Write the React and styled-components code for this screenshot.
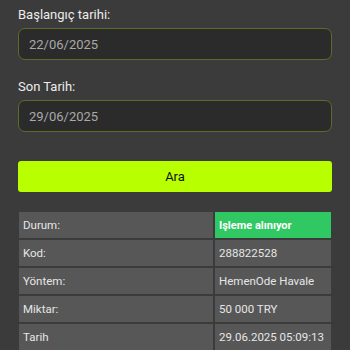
import React from "react";
import styled, { createGlobalStyle } from "styled-components";

const rows = [
  { label: "Durum:", value: "Işleme alınıyor", status: true },
  { label: "Kod:", value: "288822528" },
  { label: "Yöntem:", value: "HemenOde Havale" },
  { label: "Miktar:", value: "50 000 TRY" },
  { label: "Tarih", value: "29.06.2025 05:09:13" },
];

const App = () => {
  return (
    <Page>
      <GlobalStyle />
      <Field>
        <Label>Başlangıç tarihi:</Label>
        <DateInput readOnly value="22/06/2025" />
      </Field>
      <Field>
        <Label>Son Tarih:</Label>
        <DateInput readOnly value="29/06/2025" />
      </Field>
      <SearchButton type="button">Ara</SearchButton>
      <Table>
        {rows.map((row, index) => (
          <React.Fragment key={index}>
            <Cell>{row.label}</Cell>
            <Cell $status={row.status}>{row.value}</Cell>
          </React.Fragment>
        ))}
      </Table>
    </Page>
  );
};

const GlobalStyle = createGlobalStyle`
  body {
    margin: 0;
    background: #3b3b3b;
    font-family: Roboto, "Liberation Sans", sans-serif;
  }
`;

const Page = styled.div`
  display: flex;
  flex-direction: column;
  padding: 7px 18px 0 18px;
  height: 343px;
  overflow: hidden;
`;

const Field = styled.div`
  display: flex;
  flex-direction: column;
  margin-bottom: 19px;
`;

const Label = styled.label`
  color: #ececec;
  font-size: 13px;
  line-height: 16px;
  margin-bottom: 5px;
`;

const DateInput = styled.input`
  box-sizing: border-box;
  width: 100%;
  height: 32px;
  padding: 0 10px;
  background: #2b2b2b;
  border: 1px solid #5c6b2a;
  border-radius: 7px;
  color: #a9a9a9;
  font-family: Roboto, "Liberation Sans", sans-serif;
  font-size: 13px;
  outline: none;
`;

const SearchButton = styled.button`
  flex-shrink: 0;
  width: 100%;
  height: 31px;
  margin-top: 10px;
  background: #b8ff00;
  border: none;
  border-radius: 3px;
  color: #111;
  font-family: Roboto, "Liberation Sans", sans-serif;
  font-size: 13px;
`;

const Table = styled.div`
  display: grid;
  grid-template-columns: 194px 116px;
  grid-auto-rows: 26px;
  gap: 2px;
  margin: 20px 0 0 1px;
`;

const Cell = styled.div`
  display: flex;
  align-items: center;
  padding: 0 4px;
  background: ${({ $status }) => ($status ? "#2fc862" : "#575757")};
  color: ${({ $status }) => ($status ? "#ffffff" : "#e6e6e6")};
  font-size: ${({ $status }) => ($status ? "11px" : "11.5px")};
  font-weight: ${({ $status }) => ($status ? 700 : 400)};
  white-space: nowrap;
`;

export default App;
